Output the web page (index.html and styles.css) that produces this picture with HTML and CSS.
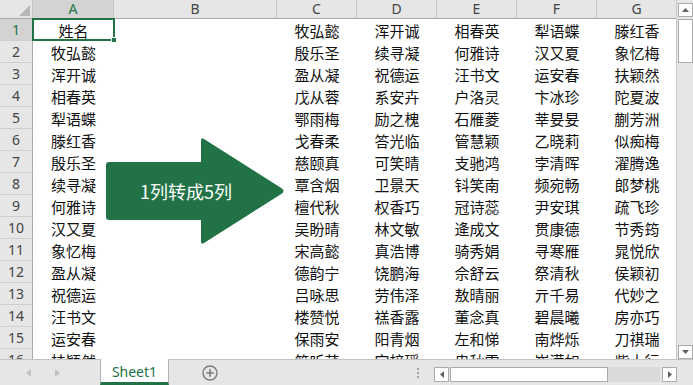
FILE: index.html
```html
<!DOCTYPE html>
<html lang="zh-CN">
<head>
<meta charset="utf-8">
<title>Sheet1</title>
<link rel="stylesheet" href="styles.css">
</head>
<body>
<div class="app">
  <div class="top">
    <div class="sheet">
      <div class="row hdr">
        <div class="corner"><svg width="33" height="19" viewBox="0 0 33 19"><polygon points="30,5 30,16 19,16" fill="#b8b8b8"/></svg></div>
        <div class="ch sel">A</div><div class="ch">B</div><div class="ch">C</div><div class="ch">D</div><div class="ch">E</div><div class="ch">F</div><div class="ch">G</div>
      </div>
      <div class="row"><div class="rh sel">1</div><div class="c a1">姓名<span class="selbox"><span class="handle"></span></span></div><div class="c"></div><div class="c">牧弘懿</div><div class="c">浑开诚</div><div class="c">相春英</div><div class="c">犁语蝶</div><div class="c">滕红香</div></div>
      <div class="row"><div class="rh">2</div><div class="c">牧弘懿</div><div class="c"></div><div class="c">殷乐圣</div><div class="c">续寻凝</div><div class="c">何雅诗</div><div class="c">汉又夏</div><div class="c">象忆梅</div></div>
      <div class="row"><div class="rh">3</div><div class="c">浑开诚</div><div class="c"></div><div class="c">盈从凝</div><div class="c">祝德运</div><div class="c">汪书文</div><div class="c">运安春</div><div class="c">扶颖然</div></div>
      <div class="row"><div class="rh">4</div><div class="c">相春英</div><div class="c"></div><div class="c">戊从蓉</div><div class="c">系安卉</div><div class="c">户洛灵</div><div class="c">卞冰珍</div><div class="c">陀夏波</div></div>
      <div class="row"><div class="rh">5</div><div class="c">犁语蝶</div><div class="c"></div><div class="c">鄂雨梅</div><div class="c">励之槐</div><div class="c">石雁菱</div><div class="c">莘妟妟</div><div class="c">蒯芳洲</div></div>
      <div class="row"><div class="rh">6</div><div class="c">滕红香</div><div class="c"></div><div class="c">戈春柔</div><div class="c">答光临</div><div class="c">管慧颖</div><div class="c">乙晓莉</div><div class="c">似痴梅</div></div>
      <div class="row"><div class="rh">7</div><div class="c">殷乐圣</div><div class="c"></div><div class="c">慈颐真</div><div class="c">可笑晴</div><div class="c">支驰鸿</div><div class="c">孛清晖</div><div class="c">濯腾逸</div></div>
      <div class="row"><div class="rh">8</div><div class="c">续寻凝</div><div class="c"></div><div class="c">覃含烟</div><div class="c">卫景天</div><div class="c">钭笑南</div><div class="c">频宛畅</div><div class="c">郎梦桃</div></div>
      <div class="row"><div class="rh">9</div><div class="c">何雅诗</div><div class="c"></div><div class="c">檀代秋</div><div class="c">权香巧</div><div class="c">冠诗蕊</div><div class="c">尹安琪</div><div class="c">疏飞珍</div></div>
      <div class="row"><div class="rh">10</div><div class="c">汉又夏</div><div class="c"></div><div class="c">吴盼晴</div><div class="c">林文敏</div><div class="c">逄成文</div><div class="c">贯康德</div><div class="c">节秀筠</div></div>
      <div class="row"><div class="rh">11</div><div class="c">象忆梅</div><div class="c"></div><div class="c">宋高懿</div><div class="c">真浩博</div><div class="c">骑秀娟</div><div class="c">寻寒雁</div><div class="c">晁悦欣</div></div>
      <div class="row"><div class="rh">12</div><div class="c">盈从凝</div><div class="c"></div><div class="c">德韵宁</div><div class="c">饶鹏海</div><div class="c">佘舒云</div><div class="c">祭清秋</div><div class="c">侯颖初</div></div>
      <div class="row"><div class="rh">13</div><div class="c">祝德运</div><div class="c"></div><div class="c">吕咏思</div><div class="c">劳伟泽</div><div class="c">敖晴丽</div><div class="c">亓千易</div><div class="c">代妙之</div></div>
      <div class="row"><div class="rh">14</div><div class="c">汪书文</div><div class="c"></div><div class="c">楼赞悦</div><div class="c">禚香露</div><div class="c">董念真</div><div class="c">碧晨曦</div><div class="c">房亦巧</div></div>
      <div class="row"><div class="rh">15</div><div class="c">运安春</div><div class="c"></div><div class="c">保雨安</div><div class="c">阳青烟</div><div class="c">左和悌</div><div class="c">南烨烁</div><div class="c">刀祺瑞</div></div>
      <div class="row"><div class="rh">16</div><div class="c">扶颖然</div><div class="c"></div><div class="c">简听芹</div><div class="c">宫梓瑶</div><div class="c">冉秋雪</div><div class="c">崔滢如</div><div class="c">紫士行</div></div>

      <svg class="arrow" width="677" height="359" viewBox="0 0 677 359">
        <path d="M106,165 Q106,162 109,162 L201,162 L201,141 Q201,137 204,139 L282,188.5 Q285,191 282,193.5 L204,243 Q201,245 201,241 L201,220 L109,220 Q106,220 106,217 Z" fill="#217346"/>
      </svg>
      <div class="arrow-label">1列转成5列</div>
    </div>
    <div class="vscroll">
      <div class="sbtn up"><svg width="7" height="4" viewBox="0 0 7 4"><polygon points="0,4 7,4 3.5,0" fill="#606060"/></svg></div>
      <div class="vthumb"></div>
      <div class="vtrack"></div>
      <div class="sbtn down"><svg width="7" height="4" viewBox="0 0 7 4"><polygon points="0,0 7,0 3.5,4" fill="#606060"/></svg></div>
    </div>
  </div>
  <div class="bottombar">
    <div class="nav">
      <svg width="5" height="8" viewBox="0 0 5 8"><polygon points="5,0 5,8 0,4" fill="#c2c2c2"/></svg>
      <svg width="5" height="8" viewBox="0 0 5 8"><polygon points="0,0 0,8 5,4" fill="#c2c2c2"/></svg>
    </div>
    <div class="tab">Sheet1</div>
    <div class="add"><svg width="16" height="16" viewBox="0 0 16 16"><circle cx="8" cy="8" r="7" fill="none" stroke="#7a7a7a" stroke-width="1.4"/><path d="M8,4.3 V11.7 M4.3,8 H11.7" stroke="#7a7a7a" stroke-width="1.6"/></svg></div>
    <div class="spacer"></div>
    <div class="dots"><span></span><span></span><span></span></div>
    <div class="hscroll">
      <div class="sbtn hleft"><svg width="4" height="7" viewBox="0 0 4 7"><polygon points="4,0 4,7 0,3.5" fill="#606060"/></svg></div>
      <div class="hthumb"></div>
      <div class="htrack"></div>
      <div class="sbtn hright"><svg width="4" height="7" viewBox="0 0 4 7"><polygon points="0,0 0,7 4,3.5" fill="#606060"/></svg></div>
    </div>
    <div class="corner-fill"></div>
  </div>
</div>
</body>
</html>
```

FILE: styles.css
```css
* { box-sizing: border-box; }
html, body { margin: 0; padding: 0; }
body {
  width: 693px;
  height: 385px;
  overflow: hidden;
  background: #ffffff;
  font-family: "Noto Sans", "Noto Sans CJK SC", sans-serif;
}
.app {
  display: flex;
  flex-direction: column;
  height: 385px;
}
.top {
  display: flex;
  height: 359px;
}
.sheet {
  position: relative;
  width: 677px;
  height: 359px;
  overflow: hidden;
  border-right: 1px solid #c8c8c8;
}
.row {
  display: grid;
  grid-template-columns: 33px 81px 163px 80px 80px 80px 80px 80px;
  height: 22px;
}
.row.hdr {
  height: 19px;
  background: #e6e6e6;
  border-bottom: 1px solid #a9a9a9;
}
.corner {
  background: #e6e6e6;
  border-right: 1px solid #c4c4c4;
  height: 18px;
}
.corner svg { display: block; }
.ch {
  height: 18px;
  display: flex;
  align-items: center;
  justify-content: center;
  font-size: 14px;
  color: #444444;
  border-right: 1px solid #c4c4c4;
  line-height: 1;
}
.ch.sel {
  background: #d3d3d3;
  color: #217346;
}
.rh {
  display: flex;
  align-items: center;
  justify-content: center;
  background: #e6e6e6;
  border-right: 1px solid #a9a9a9;
  border-bottom: 1px solid #cfcfcf;
  font-size: 14px;
  color: #444444;
  line-height: 1;
}
.rh.sel {
  background: #d3d3d3;
  color: #217346;
}
.c {
  display: flex;
  align-items: center;
  justify-content: center;
  font-family: "Noto Sans CJK SC", sans-serif;
  font-size: 15px;
  color: #111111;
  white-space: nowrap;
  line-height: 1;
}
.a1 { position: relative; }
.selbox {
  position: absolute;
  left: -1px;
  top: -1px;
  right: -1px;
  bottom: 0;
  border: 2px solid #217346;
}
.handle {
  position: absolute;
  right: -4px;
  bottom: -4px;
  width: 6px;
  height: 6px;
  background: #217346;
  border: 1px solid #ffffff;
}
.arrow {
  position: absolute;
  left: 0;
  top: 0;
  pointer-events: none;
}
.arrow-label {
  position: absolute;
  left: 138px;
  top: 178px;
  width: 96px;
  text-align: center;
  font-family: "Noto Sans CJK SC", sans-serif;
  font-size: 18px;
  line-height: 26px;
  color: #ffffff;
  white-space: nowrap;
}
.vscroll {
  width: 16px;
  background: #e6e6e6;
  display: flex;
  flex-direction: column;
  padding: 3px 0 0 1px;
}
.sbtn {
  background: #ffffff;
  border: 1px solid #ababab;
  display: flex;
  align-items: center;
  justify-content: center;
}
.sbtn svg { display: block; }
.up, .down { height: 14px; }
.vthumb {
  height: 44px;
  margin-top: 2px;
  background: #ffffff;
  border: 1px solid #ababab;
}
.vtrack { flex: 1; }
.down { margin-bottom: 0; }
.bottombar {
  height: 26px;
  background: #e6e6e6;
  border-top: 1px solid #c3c3c3;
  display: flex;
  align-items: stretch;
}
.nav {
  width: 100px;
  display: flex;
  align-items: center;
  gap: 24px;
  padding-left: 26px;
}
.nav svg { display: block; }
.tab {
  width: 69px;
  margin-top: -1px;
  background: #ffffff;
  border-left: 1px solid #b4b4b4;
  border-right: 1px solid #b4b4b4;
  border-bottom: 3px solid #217346;
  display: flex;
  align-items: center;
  justify-content: center;
  font-family: "Noto Sans", sans-serif;
  font-size: 14px;
  color: #217346;
  padding-top: 2px;
}
.add {
  width: 16px;
  margin-left: 33px;
  display: flex;
  align-items: center;
}
.add svg { display: block; }
.spacer { flex: 1; }
.dots {
  width: 4px;
  display: flex;
  flex-direction: column;
  justify-content: center;
  gap: 2px;
  margin-right: 13px;
}
.dots span {
  display: block;
  width: 2px;
  height: 2px;
  background: #a0a0a0;
}
.hscroll {
  width: 243px;
  height: 15px;
  margin-top: 7px;
  display: flex;
}
.hleft, .hright { width: 15px; }
.hthumb {
  width: 158px;
  background: #ffffff;
  border: 1px solid #ababab;
  margin-left: 1px;
}
.htrack { flex: 1; background: #dadada; margin-right: 2px; }
.corner-fill { width: 16px; }
```
